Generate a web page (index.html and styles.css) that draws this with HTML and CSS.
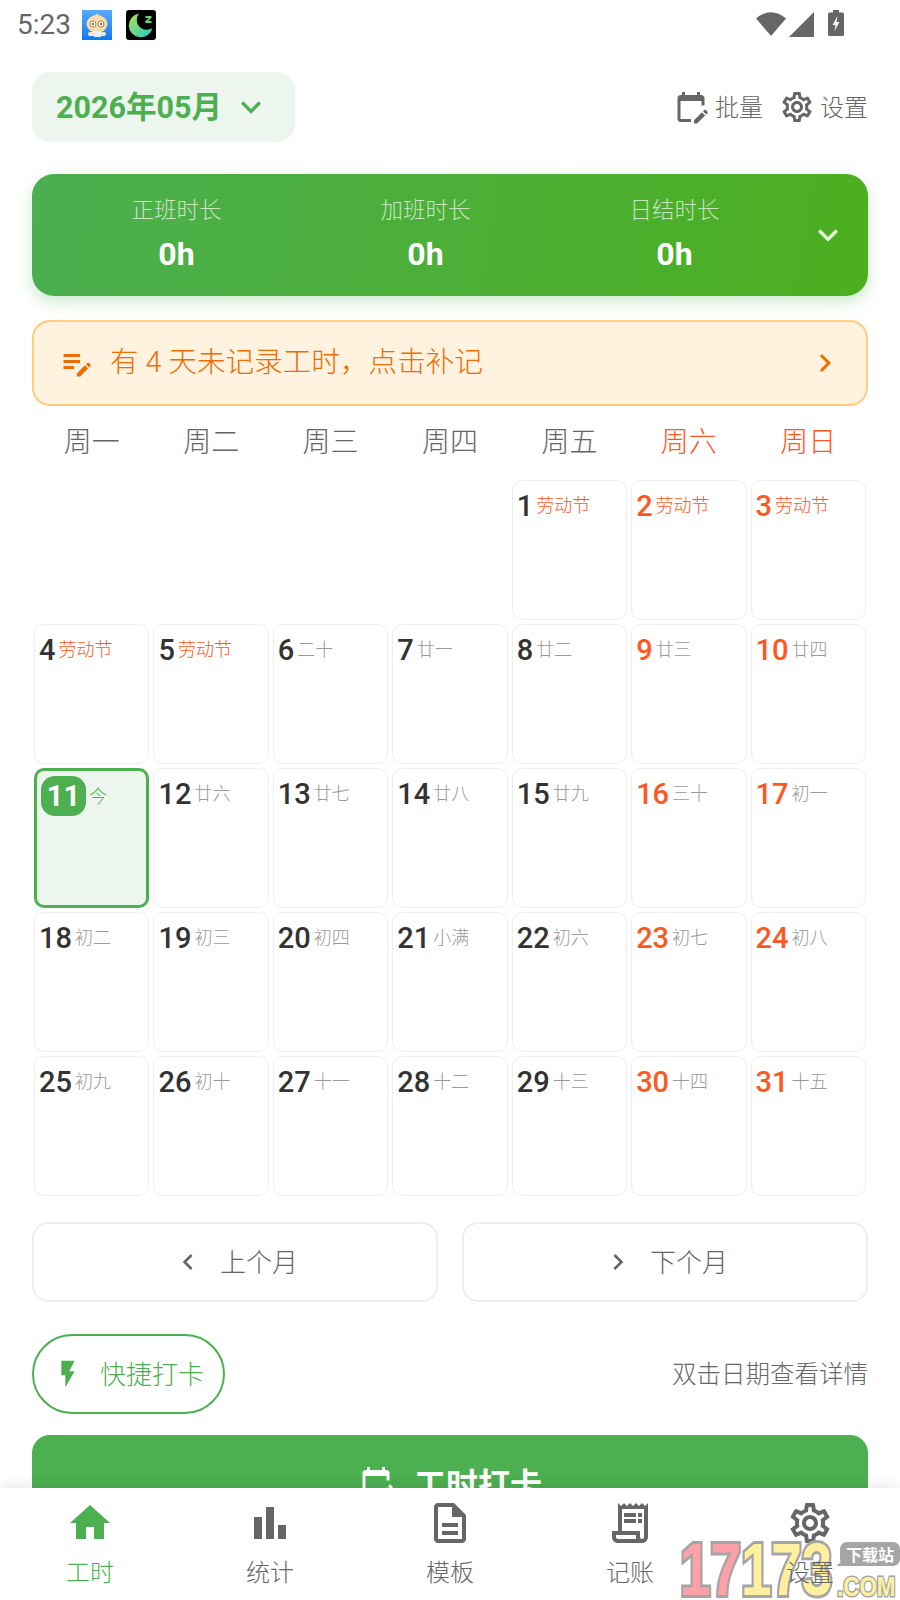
FILE: index.html
```html
<!DOCTYPE html>
<html lang="zh">
<head>
<meta charset="utf-8">
<title>工时</title>
<link rel="stylesheet" href="styles.css">
</head>
<body>
<div class="page">
  <div class="status">
    <div class="status-left">
      <span class="time">5:23</span>
      <svg class="app-icon" viewBox="0 0 30 30"><defs><linearGradient id="ab" x1="0" y1="0" x2="0" y2="1"><stop offset="0" stop-color="#5aa9ff"/><stop offset="1" stop-color="#0a7cf0"/></linearGradient></defs><rect width="30" height="30" fill="url(#ab)"/><ellipse cx="15" cy="14" rx="10.500" ry="9" fill="#fbdca6"/><path d="M12 6q3-4 6 0z" fill="#fbdca6"/><circle cx="11" cy="14" r="3" fill="#fff" stroke="#8a6a3a" stroke-width=".8"/><circle cx="19" cy="14" r="3" fill="#fff" stroke="#8a6a3a" stroke-width=".8"/><circle cx="11" cy="14" r="1" fill="#5a4020"/><circle cx="19" cy="14" r="1" fill="#5a4020"/><rect x="6" y="22" width="18" height="4" rx="2" fill="#fbe6c4"/><rect x="12" y="21" width="7" height="6" fill="#e8f2ff"/></svg>
      <svg class="app-icon moon" viewBox="0 0 30 30"><defs><linearGradient id="mg" x1="0" y1="0" x2="1" y2="1"><stop offset="0" stop-color="#b6e651"/><stop offset="1" stop-color="#1cc8c8"/></linearGradient></defs><rect width="30" height="30" rx="3" fill="#000"/><path d="M13 3.500A12 12 0 1 0 26.500 18 10 10 0 0 1 13 3.500z" fill="url(#mg)"/><path d="M19.500 6h6v1.800l-3.500 3.200h3.500v2h-6.200v-1.800l3.500-3.200h-3.300z" fill="#5fdc6e"/></svg>
    </div>
    <div class="status-right">
      <svg class="wifi" viewBox="0 0 30 25"><path d="M0 7.500Q15-5 30 7.500L15 25z" fill="#666"/></svg>
      <svg class="signal" viewBox="0 0 25 25"><path d="M25 0v25H0z" fill="#666"/></svg>
      <svg class="battery" viewBox="0 0 16 26"><path d="M5 0h6v2.500h3.500q1.500 0 1.500 1.500v20.500q0 1.500-1.500 1.500h-13q-1.500 0-1.500-1.500V4q0-1.500 1.500-1.500H5z" fill="#666"/><path d="M9.500 6 4.500 15h3l-1 6 5-9h-3z" fill="#fff"/></svg>
    </div>
  </div>

  <main class="content">
    <div class="header">
      <div class="month-pill">
        <span class="month-text">2026年05月</span>
        <svg class="ico-40 green-fill" viewBox="0 0 24 24"><path d="M16.590 8.590 12 13.170 7.410 8.590 6 10l6 6 6-6z"/></svg>
      </div>
      <div class="actions">
        <div class="action">
          <svg class="ico-36 grey-fill" viewBox="0 0 24 24"><path d="M5 8h14v3h2V6c0-1.100-.9-2-2-2h-1V2h-2v2H8V2H6v2H5c-1.100 0-2 .9-2 2v14c0 1.100.9 2 2 2h7v-2H5V8z"/><path d="M22.840 16.280l-.71.71-2.120-2.120.71-.71c.39-.39 1.020-.39 1.410 0l.71.71c.39.39.39 1.020 0 1.410zm-3.540-.7 2.120 2.120-5.300 5.300H14v-2.120l5.300-5.300z"/></svg>
          <span class="lift">批量</span>
        </div>
        <div class="action">
          <svg class="ico-36 grey-fill" viewBox="0 0 24 24"><use href="#gear"/></svg>
          <span class="lift">设置</span>
        </div>
      </div>
    </div>

    <section class="summary">
      <div class="sum-col"><div class="sum-label">正班时长</div><div class="sum-value">0h</div></div>
      <div class="sum-col"><div class="sum-label">加班时长</div><div class="sum-value">0h</div></div>
      <div class="sum-col"><div class="sum-label">日结时长</div><div class="sum-value">0h</div></div>
      <svg class="ico-40 sum-chev" viewBox="0 0 24 24"><path d="M16.590 8.590 12 13.170 7.410 8.590 6 10l6 6 6-6z"/></svg>
    </section>

    <section class="banner">
      <svg class="banner-ico" viewBox="0 0 24 24"><path d="M3 10h11v2H3v-2zm0-2h11V6H3v2zm0 8h7v-2H3v2zm15.010-3.130.71-.71c.39-.39 1.020-.39 1.410 0l.71.71c.39.39.39 1.020 0 1.410l-.71.71-2.120-2.120zm-.71.71-5.300 5.300V21h2.120l5.300-5.300-2.120-2.120z"/></svg>
      <span class="banner-text">有 4 天未记录工时，点击补记</span>
      <svg class="ico-36 banner-chev" viewBox="0 0 24 24"><path d="M8.590 16.590 13.170 12 8.590 7.410 10 6l6 6-6 6z"/></svg>
    </section>

    <div class="week">
      <span>周一</span><span>周二</span><span>周三</span><span>周四</span><span>周五</span><span class="red">周六</span><span class="red">周日</span>
    </div>

    <div class="cal">
      <div class="blank"></div><div class="blank"></div><div class="blank"></div><div class="blank"></div>
      <div class="cell"><b>1</b><i class="hol">劳动节</i></div>
      <div class="cell we"><b>2</b><i class="hol">劳动节</i></div>
      <div class="cell we"><b>3</b><i class="hol">劳动节</i></div>

      <div class="cell"><b>4</b><i class="hol">劳动节</i></div>
      <div class="cell"><b>5</b><i class="hol">劳动节</i></div>
      <div class="cell"><b>6</b><i>二十</i></div>
      <div class="cell"><b>7</b><i>廿一</i></div>
      <div class="cell"><b>8</b><i>廿二</i></div>
      <div class="cell we"><b>9</b><i>廿三</i></div>
      <div class="cell we"><b>10</b><i>廿四</i></div>

      <div class="cell today"><b>11</b><i>今</i></div>
      <div class="cell"><b>12</b><i>廿六</i></div>
      <div class="cell"><b>13</b><i>廿七</i></div>
      <div class="cell"><b>14</b><i>廿八</i></div>
      <div class="cell"><b>15</b><i>廿九</i></div>
      <div class="cell we"><b>16</b><i>三十</i></div>
      <div class="cell we"><b>17</b><i>初一</i></div>

      <div class="cell"><b>18</b><i>初二</i></div>
      <div class="cell"><b>19</b><i>初三</i></div>
      <div class="cell"><b>20</b><i>初四</i></div>
      <div class="cell"><b>21</b><i>小满</i></div>
      <div class="cell"><b>22</b><i>初六</i></div>
      <div class="cell we"><b>23</b><i>初七</i></div>
      <div class="cell we"><b>24</b><i>初八</i></div>

      <div class="cell"><b>25</b><i>初九</i></div>
      <div class="cell"><b>26</b><i>初十</i></div>
      <div class="cell"><b>27</b><i>十一</i></div>
      <div class="cell"><b>28</b><i>十二</i></div>
      <div class="cell"><b>29</b><i>十三</i></div>
      <div class="cell we"><b>30</b><i>十四</i></div>
      <div class="cell we"><b>31</b><i>十五</i></div>
    </div>

    <div class="pager">
      <div class="page-btn">
        <svg class="ico-32 grey-fill" viewBox="0 0 24 24"><path d="M15.410 7.410 14 6l-6 6 6 6 1.410-1.410L10.830 12z"/></svg>
        <span class="lift">上个月</span>
      </div>
      <div class="page-btn">
        <svg class="ico-32 grey-fill" viewBox="0 0 24 24"><path d="M8.590 16.590 13.170 12 8.590 7.410 10 6l6 6-6 6z"/></svg>
        <span class="lift">下个月</span>
      </div>
    </div>

    <div class="quick-row">
      <div class="quick">
        <svg class="ico-32 green-fill" viewBox="0 0 24 24"><path d="M7 2v11h3v9l7-12h-4l4-8z"/></svg>
        <span class="lift">快捷打卡</span>
      </div>
      <span class="hint lift">双击日期查看详情</span>
    </div>

    <div class="punch">
      <svg class="ico-36 white-fill" viewBox="0 0 24 24"><path d="M5 8h14v3h2V6c0-1.100-.9-2-2-2h-1V2h-2v2H8V2H6v2H5c-1.100 0-2 .9-2 2v14c0 1.100.9 2 2 2h7v-2H5V8z"/><path d="M22.840 16.280l-.71.71-2.120-2.120.71-.71c.39-.39 1.020-.39 1.410 0l.71.71c.39.39.39 1.020 0 1.410zm-3.540-.7 2.120 2.120-5.300 5.300H14v-2.120l5.300-5.300z"/></svg>
      <span>工时打卡</span>
    </div>
  </main>

  <nav class="nav">
    <div class="nav-item active">
      <svg class="nav-ico" viewBox="0 0 24 24"><path d="M10 20v-6h4v6h5v-8h3L12 3 2 12h3v8z"/></svg>
      <span class="nav-label">工时</span>
    </div>
    <div class="nav-item">
      <svg class="nav-ico" viewBox="0 0 24 24"><path d="M4 9h4v11H4zm12 4h4v7h-4zM10 4h4v16h-4z"/></svg>
      <span class="nav-label">统计</span>
    </div>
    <div class="nav-item">
      <svg class="nav-ico" viewBox="0 0 24 24"><path d="M8 16h8v2H8zm0-4h8v2H8zm6-10H6c-1.100 0-2 .9-2 2v16c0 1.100.89 2 1.990 2H18c1.100 0 2-.9 2-2V8l-6-6zm4 18H6V4h7v5h5v11z"/></svg>
      <span class="nav-label">模板</span>
    </div>
    <div class="nav-item">
      <svg class="nav-ico" viewBox="0 0 24 24"><path d="M19.500 3.500 18 2l-1.500 1.500L15 2l-1.500 1.500L12 2l-1.500 1.500L9 2 7.500 3.500 6 2v14H3v3c0 1.660 1.340 3 3 3h12c1.660 0 3-1.340 3-3V2l-1.500 1.500zM15 20H6c-.55 0-1-.45-1-1v-1h10v2zm4-1c0 .55-.45 1-1 1s-1-.45-1-1v-3H8V5h11v14z"/><path d="M9 7h6v2H9zm7 0h2v2h-2zm-7 3h6v2H9zm7 0h2v2h-2z"/></svg>
      <span class="nav-label">记账</span>
    </div>
    <div class="nav-item">
      <svg class="nav-ico" viewBox="0 0 24 24"><use href="#gear"/></svg>
      <span class="nav-label">设置</span>
    </div>
  </nav>

  <div class="watermark">
    <span class="wm-num"><span class="pink">17</span><span class="yellow">173</span></span>
    <span class="wm-tag">下载站</span>
    <span class="wm-com">.COM</span>
  </div>

  <svg class="defs" width="0" height="0"><defs><path id="gear" d="M19.430 12.980c.04-.32.07-.64.07-.98 0-.34-.03-.66-.07-.98l2.110-1.650c.19-.15.24-.42.12-.64l-2-3.460c-.09-.16-.26-.25-.44-.25-.06 0-.12.01-.17.03l-2.490 1c-.52-.4-1.080-.73-1.690-.98l-.38-2.650C14.460 2.180 14.250 2 14 2h-4c-.25 0-.46.18-.49.42l-.38 2.650c-.61.25-1.170.59-1.690.98l-2.490-1c-.06-.02-.12-.03-.18-.03-.17 0-.34.09-.43.25l-2 3.460c-.13.22-.07.49.12.64l2.110 1.650c-.04.32-.07.65-.07.98 0 .33.03.66.07.98l-2.110 1.650c-.19.15-.24.42-.12.64l2 3.460c.09.16.26.25.44.25.06 0 .12-.01.17-.03l2.490-1c.52.4 1.080.73 1.690.98l.38 2.650c.03.24.24.42.49.42h4c.25 0 .46-.18.49-.42l.38-2.650c.61-.25 1.170-.59 1.690-.98l2.490 1c.06.02.12.03.18.03.17 0 .34-.09.43-.25l2-3.460c.12-.22.07-.49-.12-.64l-2.110-1.650zm-1.980-1.710c.04.31.05.52.05.73 0 .21-.02.43-.05.73l-.14 1.130.89.7 1.080.84-.7 1.210-1.270-.51-1.040-.42-.9.68c-.43.32-.84.56-1.250.73l-1.060.43-.16 1.130-.2 1.350h-1.400l-.19-1.350-.16-1.130-1.060-.43c-.43-.18-.83-.41-1.230-.71l-.91-.7-1.060.43-1.270.51-.7-1.210 1.080-.84.89-.7-.14-1.130c-.03-.31-.05-.54-.05-.74s.02-.43.05-.73l.14-1.130-.89-.7-1.080-.84.7-1.210 1.270.51 1.040.42.9-.68c.43-.32.84-.56 1.250-.73l1.060-.43.16-1.130.2-1.350h1.390l.19 1.350.16 1.130 1.060.43c.43.18.83.41 1.230.71l.91.7 1.060-.43 1.270-.51.7 1.210-1.070.85-.89.7.14 1.130zM12 8c-2.210 0-4 1.790-4 4s1.790 4 4 4 4-1.790 4-4-1.790-4-4-4zm0 6c-1.100 0-2-.9-2-2s.9-2 2-2 2 .9 2 2-.9 2-2 2z"/></defs></svg>
</div>
</body>
</html>
```
FILE: styles.css
```css
* { box-sizing: border-box; }
html, body { margin: 0; padding: 0; background: #fff; }
body {
  font-family: Roboto, "Noto Sans CJK SC", sans-serif;
  font-weight: 300;
  color: #333;
}
.page {
  position: relative;
  width: 900px;
  height: 1600px;
  overflow: hidden;
  background: #fff;
}
svg { display: block; flex: none; }
.defs { position: absolute; }
.ico-32 { width: 32px; height: 32px; }
.ico-36 { width: 36px; height: 36px; }
.ico-40 { width: 40px; height: 40px; }
.green-fill { fill: #4caf50; }
.grey-fill { fill: #666; }
.white-fill { fill: #fff; }
.lift { padding-bottom: 4px; }

/* status bar */
.status {
  height: 50px;
  padding: 9px 56px 0 17px;
  display: flex;
  justify-content: space-between;
  align-items: flex-start;
}
.status-left { display: flex; align-items: center; }
.time { font-size: 28px; line-height: 32px; font-weight: 400; color: #666; width: 65px; }
.app-icon { width: 30px; height: 30px; }
.moon { margin-left: 14px; }
.status-right { display: flex; align-items: flex-start; }
.wifi { width: 30px; height: 25px; margin-top: 2px; }
.signal { width: 25px; height: 25px; margin: 3px 0 0 3px; }
.battery { width: 16px; height: 26px; margin: 1px 0 0 14px; }

.content { padding: 0 32px; }

/* header */
.header {
  margin-top: 22px;
  height: 70px;
  display: flex;
  justify-content: space-between;
  align-items: center;
}
.month-pill {
  width: 263px;
  height: 70px;
  padding-left: 24px;
  border-radius: 18px;
  background: #edf6ee;
  display: flex;
  align-items: center;
  gap: 9px;
}
.month-text { padding-top: 2px; font-size: 30.500px; font-weight: 700; color: #4caf50; line-height: 36px; }
.actions { display: flex; gap: 16px; align-items: center; }
.action { display: flex; align-items: center; gap: 6px; font-size: 24px; color: #666; }
.action + .action { gap: 5px; }

/* summary */
.summary {
  margin-top: 32px;
  height: 122px;
  padding-left: 20px;
  border-radius: 22px;
  background: linear-gradient(100deg, #4caf50, #4caf1f);
  box-shadow: 0 6px 16px rgba(76, 175, 80, .28);
  display: flex;
  align-items: center;
}
.sum-col { width: 249px; text-align: center; }
.sum-label { font-size: 22.500px; line-height: 30px; margin-top: -3px; color: rgba(255, 255, 255, .7); }
.sum-value { margin-top: 10px; font-size: 32px; line-height: 38px; font-weight: 700; color: #fff; }
.sum-chev { fill: rgba(255, 255, 255, .85); margin-left: 9px; }

/* banner */
.banner {
  margin-top: 24px;
  height: 86px;
  padding: 0 23px 0 26px;
  border: 2px solid #ffcc80;
  border-radius: 18px;
  background: #fff3e0;
  display: flex;
  align-items: center;
  color: #ef6c00;
}
.banner-ico { width: 36px; height: 36px; fill: #ef6c00; margin-left: -1px; }
.banner-text { flex: 1; margin-left: 15px; padding-bottom: 2px; font-size: 28.600px; line-height: 36px; }
.banner-chev { fill: #ef6c00; }

/* week */
.week {
  height: 74px;
  padding: 0 2px 6px;
  display: grid;
  grid-template-columns: repeat(7, 1fr);
  column-gap: 4px;
  align-items: center;
  text-align: center;
  font-size: 28px;
  color: #666;
}
.week .red { color: #ff5722; }

/* calendar */
.cal {
  padding: 0 2px;
  display: grid;
  grid-template-columns: repeat(7, 1fr);
  grid-auto-rows: 140px;
  gap: 4px;
}
.cell {
  padding: 8px 4px 0;
  border: 1px solid #eee;
  border-radius: 10px;
  background: #fff;
  display: flex;
  align-items: flex-start;
}
.cell b {
  font-size: 29px;
  line-height: 34px;
  font-weight: 500;
  color: #333;
}
.cell i {
  margin: 5px 0 0 3px;
  font-style: normal;
  font-size: 18px;
  line-height: 24px;
  color: #999;
}
.cell i.hol { color: #ff5722; }
.cell.we b { color: #ff5722; }
.cell.today {
  padding: 5px 4px 0;
  border: 3px solid #4caf50;
  background: #edf6ee;
}
.cell.today b {
  width: 45px;
  height: 40px;
  line-height: 40px;
  text-align: center;
  border-radius: 14px;
  background: #4caf50;
  color: #fff;
  font-weight: 700;
}
.cell.today i { margin: 9px 0 0 3px; color: #4caf50; }

/* pager */
.pager {
  margin-top: 26px;
  display: flex;
  gap: 24px;
}
.page-btn {
  flex: 1;
  height: 80px;
  border: 2px solid #eee;
  border-radius: 16px;
  display: flex;
  align-items: center;
  justify-content: center;
  gap: 16px;
  font-size: 26px;
  color: #666;
}

/* quick row */
.quick-row {
  margin-top: 32px;
  display: flex;
  justify-content: space-between;
  align-items: center;
}
.quick {
  width: 193px;
  height: 80px;
  padding-left: 18px;
  border: 2px solid #4caf50;
  border-radius: 40px;
  display: flex;
  align-items: center;
  gap: 16px;
  font-size: 26px;
  color: #4caf50;
}
.hint { font-size: 24.500px; color: #666; }

/* punch */
.punch {
  margin-top: 21px;
  height: 94px;
  border-radius: 18px;
  background: #4caf50;
  display: flex;
  align-items: center;
  justify-content: center;
  gap: 20px;
  font-size: 32px;
  font-weight: 700;
  color: #fff;
}

/* bottom nav */
.nav {
  position: absolute;
  left: 0;
  right: 0;
  bottom: 0;
  height: 112px;
  background: #fff;
  box-shadow: 0 -4px 10px rgba(0, 0, 0, .07);
  display: grid;
  grid-template-columns: repeat(5, 1fr);
}
.nav-item {
  padding-top: 11px;
  display: flex;
  flex-direction: column;
  align-items: center;
  color: #666;
  fill: #666;
}
.nav-item.active { color: #4caf50; fill: #4caf50; }
.nav-ico { width: 48px; height: 48px; }
.nav-label {
  position: relative;
  z-index: 2;
  margin-top: 10px;
  font-size: 24px;
  line-height: 32px;
}

/* watermark */
.watermark {
  position: absolute;
  z-index: 1;
  left: 677px;
  top: 1540px;
  width: 223px;
  height: 60px;
  font-family: "Liberation Sans", sans-serif;
  font-weight: 700;
}
.wm-num {
  position: absolute;
  left: 3px;
  top: 0;
  font-size: 74px;
  line-height: 60px;
  transform: scaleX(.74);
  transform-origin: left top;
  -webkit-text-stroke: 6px #a5a5a5;
  paint-order: stroke fill;
}
.pink { color: #ffa0a8; }
.yellow { color: #fff0a0; }
.wm-tag {
  position: absolute;
  left: 163px;
  top: 2px;
  width: 60px;
  height: 24px;
  border-radius: 7px;
  background: #a5a5a5;
  color: #fff;
  font-family: "Noto Sans CJK SC", sans-serif;
  font-size: 16px;
  line-height: 24px;
  text-align: center;
}
.wm-tag::after {
  content: "";
  position: absolute;
  left: -4px;
  bottom: 0;
  border-left: 10px solid transparent;
  border-bottom: 8px solid #a5a5a5;
}
.wm-com {
  position: absolute;
  left: 160px;
  top: 34px;
  font-size: 28px;
  line-height: 26px;
  color: #fff0a0;
  transform: scaleX(.8);
  transform-origin: left top;
  -webkit-text-stroke: 3px #a5a5a5;
  paint-order: stroke fill;
}
```
